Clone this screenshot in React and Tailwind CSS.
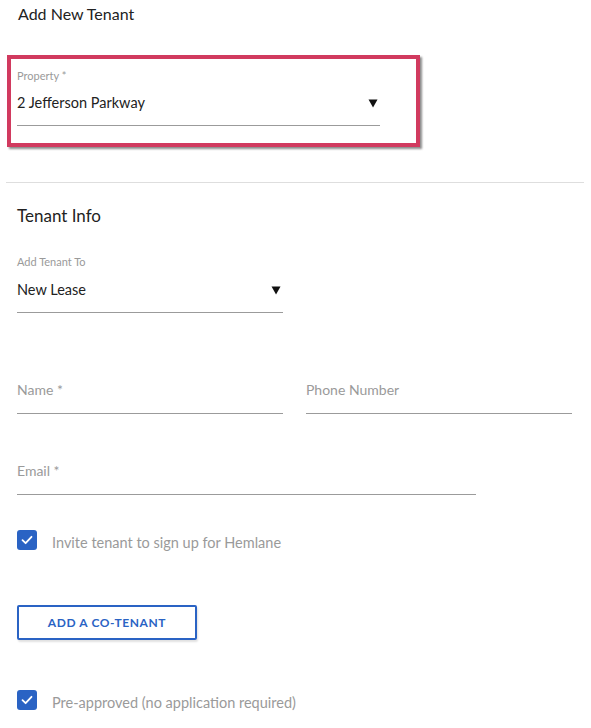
import React from 'react';

function Arrow() {
  return (
    <svg width="10" height="10" viewBox="0 0 10 10" className="shrink-0">
      <path d="M0.5 1.5 H9.5 L5 9.5 Z" fill="#111" />
    </svg>
  );
}

function SelectField({ label, value, width, labelGap = 'mt-[10px]' }) {
  return (
    <div className={width}>
      <div className="h-[14px] text-[11px] leading-[14px] text-[#9a9a9a]">{label}</div>
      <div className={`${labelGap} flex h-[20px] items-center justify-between pr-[2px] text-[14.5px] leading-[20px] text-[#222]`}>
        <span>{value}</span>
        <Arrow />
      </div>
      <div className="mt-[12px] h-px bg-[#9b9b9b]" />
    </div>
  );
}

function TextField({ label, width }) {
  return (
    <div className={width}>
      <div className="h-[20px] text-[14px] leading-[20px] text-[#9a9a9a]">{label}</div>
      <div className="mt-[13px] h-px bg-[#9b9b9b]" />
    </div>
  );
}

function Check({ label, className = '' }) {
  return (
    <label className={`flex h-[20px] items-start gap-[15px] ${className}`}>
      <span className="flex h-[20px] w-[20px] shrink-0 items-center justify-center rounded-[3px] bg-[#2a63c4]">
        <svg width="12" height="12" viewBox="0 0 12 12">
          <path d="M1.5 6.2 L4.6 9.2 L10.5 2.8" fill="none" stroke="#fff" strokeWidth="1.8" strokeLinecap="round" strokeLinejoin="round" />
        </svg>
      </span>
      <span className="pt-[3px] text-[14.5px] leading-[20px] text-[#9a9a9a]">{label}</span>
    </label>
  );
}

export default function App() {
  return (
    <div className="h-[728px] w-[591px] overflow-hidden bg-white font-['Lato',sans-serif]">
      <div className="h-[28px] pl-[18px] text-[16px] leading-[28px] text-[#222]">Add New Tenant</div>

      <div className="ml-[7px] mt-[27px] h-[92px] w-[413px] border-4 border-[#d13a5f] pl-[6px] pt-[10px] shadow-[2px_2px_2px_rgba(0,0,0,0.45)]">
        <SelectField label="Property *" value="2 Jefferson Parkway" width="w-[363px]" />
      </div>

      <div className="ml-[6px] mt-[35px] h-px w-[578px] bg-[#dedede]" />

      <div className="px-[17px]">
        <div className="mt-[21px] h-[24px] text-[17px] leading-[24px] text-[#222]">Tenant Info</div>

        <div className="mt-[27px]">
          <SelectField label="Add Tenant To" value="New Lease" width="w-[266px]" labelGap="mt-[11px]" />
        </div>

        <div className="mt-[67px] flex gap-[23px]">
          <TextField label="Name *" width="w-[266px]" />
          <TextField label="Phone Number" width="w-[266px]" />
        </div>

        <div className="mt-[47px]">
          <TextField label="Email *" width="w-[459px]" />
        </div>

        <Check label="Invite tenant to sign up for Hemlane" className="mt-[35px]" />

        <button
          type="button"
          className="mt-[55px] h-[35px] w-[180px] rounded-[2px] border-2 border-[#2a63c4] text-[12px] font-bold tracking-[0.6px] text-[#2a63c4] shadow-[1px_2px_2px_rgba(0,0,0,0.12)]"
        >
          ADD A CO-TENANT
        </button>

        <Check label="Pre-approved (no application required)" className="mt-[50px]" />
      </div>
    </div>
  );
}
